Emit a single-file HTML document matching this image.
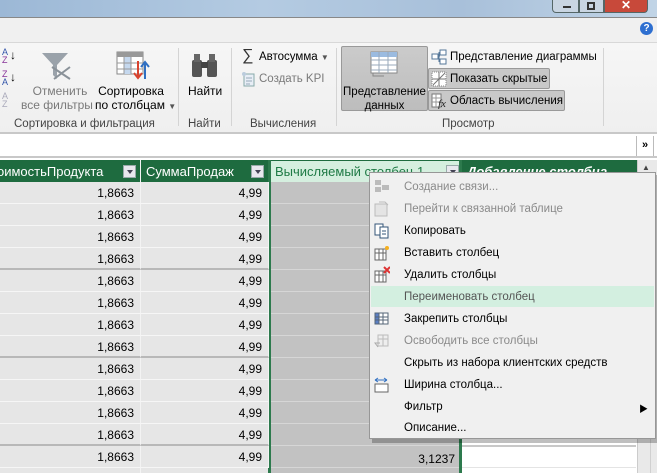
<!DOCTYPE html>
<html><head><meta charset="utf-8"><style>
*{margin:0;padding:0;box-sizing:border-box}
body{width:657px;height:473px;overflow:hidden;position:relative;font-family:"Liberation Sans","Noto Sans CJK SC",sans-serif;font-size:12px;background:#fff;color:#000}
.a{position:absolute}
.t{position:absolute;white-space:nowrap}
.g{color:#8a8a8a}
.cell{position:absolute;height:22px;border-bottom:1px solid #f6f6f6;border-right:1px solid #f3f3f3;text-align:right;padding-right:6px;line-height:22px;font-size:12px}
.mi{position:absolute;left:404px;font-size:11.5px;white-space:nowrap}
.dd{position:absolute;width:13px;height:13px;background:#e8e8ee;border:1px solid #9aa;top:165px}
.dd:after{content:"";position:absolute;left:3px;top:4px;border-left:3px solid transparent;border-right:3px solid transparent;border-top:4px solid #445}
</style></head><body>
<div class="a" style="left:0;top:0;width:657px;height:17px;background:linear-gradient(90deg,#9cb8d6,#b4cbe2 40%,#a8c0da 70%,#c1d4e6)"></div>
<div class="a" style="left:552px;top:0;width:27px;height:13px;background:#c9d5e2;border:1px solid #566;border-top:none;border-radius:0 0 0 4px"></div>
<div class="a" style="left:563px;top:6px;width:8px;height:2px;background:#333"></div>
<div class="a" style="left:579px;top:0;width:25px;height:13px;background:#c9d5e2;border:1px solid #566;border-top:none"></div>
<div class="a" style="left:587px;top:2px;width:8px;height:8px;border:2px solid #333"></div>
<div class="a" style="left:604px;top:0;width:44px;height:13px;background:#c8493a;border:1px solid #566;border-top:none;border-radius:0 0 4px 0;color:#fff;font-weight:bold;text-align:center;line-height:11px;font-size:12px">✕</div>
<div class="a" style="left:0;top:17px;width:657px;height:25px;background:#f0f0f0;border-top:1px solid #888"></div>
<div class="a" style="left:640px;top:22px;width:13px;height:13px;border-radius:50%;background:#2e6fd0;color:#fff;font-size:10px;font-weight:bold;text-align:center;line-height:13px">?</div>
<div class="a" style="left:0;top:42px;width:657px;height:92px;background:linear-gradient(#f6f6f6,#efefef);border-top:1px solid #d8d8d8;border-bottom:2px solid #c8c8c8"></div>
<div class="t" style="left:2px;top:48px;font-size:9px;line-height:8px;color:#3355aa">A<br><span style="color:#883399">Z</span></div><div class="t" style="left:10px;top:48px;font-size:12px">↓</div>
<div class="t" style="left:2px;top:70px;font-size:9px;line-height:8px;color:#883399">Z<br><span style="color:#3355aa">A</span></div><div class="t" style="left:10px;top:70px;font-size:12px">↓</div>
<div class="t" style="left:2px;top:92px;font-size:9px;line-height:8px;color:#aab">A<br>Z</div>
<svg class="a" style="left:40px;top:51px" width="32" height="30"><path d="M2 2H28L17 14V28L13 24V14Z" fill="#9aa2aa"/><path d="M12 16L30 28M30 16L14 28" stroke="#8a9299" stroke-width="2"/></svg>
<div class="t g" style="left:29px;top:84px;font-size:12px;text-align:center;line-height:14px;color:#7a7a7a;width:62px">Отменить<br><span style="margin-left:-8px">все фильтры</span></div>
<svg class="a" style="left:116px;top:51px" width="34" height="30"><rect x="1" y="1" width="26" height="22" fill="#fff" stroke="#888"/><rect x="1" y="1" width="26" height="5" fill="#999"/><rect x="8" y="6" width="7" height="17" fill="#c5d8ee"/><path d="M8 6V23M15 6V23M1 12H27M1 18H27" stroke="#999"/><path d="M22 10V26M18 22L22 27L26 22" stroke="#d9432e" stroke-width="2" fill="none"/><path d="M29 28V12M25 16L29 11L33 16" stroke="#2f6fc2" stroke-width="2" fill="none"/></svg>
<div class="t" style="left:95px;top:84px;font-size:12px;text-align:center;line-height:14px;width:72px">Сортировка<br>по столбцам <span style="font-size:8px;color:#555">▼</span></div>
<div class="t" style="left:14px;top:118px;font-size:11.5px;color:#444">Сортировка и фильтрация</div>
<div class="a" style="left:178px;top:48px;width:1px;height:78px;background:#d4d4d4"></div>
<svg class="a" style="left:191px;top:52px" width="28" height="26"><rect x="1" y="8" width="10" height="17" rx="2" fill="#555"/><rect x="16" y="8" width="10" height="17" rx="2" fill="#555"/><rect x="3" y="2" width="6" height="8" fill="#666"/><rect x="18" y="2" width="6" height="8" fill="#666"/><rect x="10" y="10" width="7" height="6" fill="#444"/></svg>
<div class="t" style="left:188px;top:84px;font-size:12px">Найти</div>
<div class="t" style="left:188px;top:118px;font-size:11.5px;color:#444">Найти</div>
<div class="a" style="left:231px;top:48px;width:1px;height:78px;background:#d4d4d4"></div>
<div class="t" style="left:242px;top:47px;font-size:16px;color:#333">∑</div>
<div class="t" style="left:259px;top:51px;font-size:11.5px">Автосумма <span style="font-size:8px;color:#555">▼</span></div>
<svg class="a" style="left:241px;top:71px" width="14" height="16"><rect x="3" y="3" width="10" height="12" fill="#e8eef6" stroke="#8aa"/><path d="M5 7H11M5 10H11M5 13H9" stroke="#9ab"/><circle cx="3" cy="3" r="2" fill="#bcd"/></svg>
<div class="t" style="left:259px;top:73px;font-size:11.5px;color:#7a7a7a">Создать KPI</div>
<div class="t" style="left:250px;top:118px;font-size:11.5px;color:#444">Вычисления</div>
<div class="a" style="left:336px;top:48px;width:1px;height:78px;background:#d4d4d4"></div>
<div class="a" style="left:341px;top:46px;width:87px;height:65px;background:linear-gradient(#cbcbcb,#bdbdbd);border:1px solid #999;border-radius:2px"></div>
<svg class="a" style="left:370px;top:51px" width="28" height="26"><rect x="1" y="1" width="26" height="21" fill="#fff" stroke="#888"/><rect x="1" y="1" width="26" height="5" fill="#9bbbe0"/><path d="M1 9H27M1 14H27M1 19H27M9 1V22M18 1V22" stroke="#9ab"/><path d="M3 22V25H14" stroke="#888" fill="none"/></svg>
<div class="t" style="left:341px;top:85px;width:87px;text-align:center;font-size:11.5px;line-height:14px">Представление<br>данных</div>
<svg class="a" style="left:431px;top:49px" width="16" height="16"><rect x="1" y="5" width="6" height="5" fill="#fff" stroke="#579"/><rect x="9" y="1" width="6" height="5" fill="#fff" stroke="#579"/><rect x="9" y="10" width="6" height="5" fill="#fff" stroke="#579"/><path d="M7 7H9M8 3V13" stroke="#579"/></svg>
<div class="t" style="left:450px;top:51px;font-size:11.5px">Представление диаграммы</div>
<div class="a" style="left:428px;top:68px;width:122px;height:21px;background:#c8c8c8;border:1px solid #999;border-radius:2px"></div>
<svg class="a" style="left:431px;top:71px" width="16" height="16"><rect x="1" y="1" width="14" height="14" fill="#fff" stroke="#888" stroke-dasharray="1 1"/><path d="M2 14L14 2M1 8H15M8 1V15" stroke="#777"/></svg>
<div class="t" style="left:450px;top:73px;font-size:11.5px">Показать скрытые</div>
<div class="a" style="left:428px;top:90px;width:137px;height:21px;background:#c8c8c8;border:1px solid #999;border-radius:2px"></div>
<svg class="a" style="left:431px;top:93px" width="16" height="16"><rect x="1" y="1" width="9" height="13" fill="#fff" stroke="#777"/><path d="M1 5H10M1 9H10M5 1V14" stroke="#999"/><text x="7" y="14" font-family="Liberation Serif" font-style="italic" font-size="11" fill="#222">fx</text></svg>
<div class="t" style="left:450px;top:95px;font-size:11.5px">Область вычисления</div>
<div class="t" style="left:442px;top:118px;font-size:11.5px;color:#444">Просмотр</div>
<div class="a" style="left:603px;top:48px;width:1px;height:78px;background:#d4d4d4"></div>
<div class="a" style="left:0;top:136px;width:657px;height:22px;background:#fff;border-bottom:2px solid #c8c8c8"></div>
<div class="a" style="left:636px;top:136px;width:18px;height:20px;border-left:1px solid #bbb;border-right:1px solid #bbb;text-align:center;font-size:11px;line-height:18px;font-weight:bold">»</div>
<div class="a" style="left:0;top:160px;width:637px;height:313px;background:#e6e6e6"></div>
<div class="a" style="left:461px;top:182px;width:176px;height:291px;background:#fff"></div>
<div class="a" style="left:270px;top:182px;width:191px;height:291px;background:#c2c2c2"></div>
<div class="a" style="left:0;top:160px;width:637px;height:22px;background:#1e6b3f"></div>
<div class="t" style="left:-3px;top:164px;color:#fff;font-size:13px">оимостьПродукта</div>
<div class="dd" style="left:123px"></div>
<div class="a" style="left:140px;top:160px;width:1px;height:313px;background:#f4f4f4"></div>
<div class="t" style="left:146px;top:164px;color:#fff;font-size:13px">СуммаПродаж</div>
<div class="dd" style="left:251px"></div>
<div class="a" style="left:270px;top:161px;width:191px;height:21px;background:#d5efdf"></div>
<div class="t" style="left:275px;top:164px;color:#1e7a45;font-size:13px">Вычисляемый столбец 1</div>
<div class="dd" style="left:446px"></div>
<div class="t" style="left:467px;top:164px;color:#fff;font-size:13px;font-style:italic;font-weight:bold">Добавление столбца</div>
<div class="a" style="left:268px;top:160px;width:3px;height:313px;background:#2d7a4d"></div>
<div class="a" style="left:459px;top:160px;width:3px;height:313px;background:#2d7a4d"></div>
<div class="a" style="left:637px;top:160px;width:20px;height:313px;background:#e9e9e9;border-left:1px solid #ccc"></div>
<div class="t" style="left:642px;top:163px;font-size:8px;color:#444">▲</div>
<div class="a" style="left:650px;top:182px;width:1px;height:291px;background:#d0d0d0"></div>
<div id="rows"></div>
<div class="a" style="left:372px;top:175px;width:287px;height:268px;background:rgba(0,0,0,.25)"></div>
<div class="a" style="left:369px;top:172px;width:287px;height:267px;background:#f0f0f0;border:1px solid #979797"></div>
<div class="a" style="left:371px;top:286px;width:283px;height:21px;background:#d3efe0"></div>
<svg class="a" style="left:374px;top:179px" width="16" height="260">
<g fill="#bbb"><rect x="1" y="1" width="6" height="5"/><rect x="8" y="6" width="7" height="5"/><rect x="1" y="8" width="6" height="5"/></g>
<g transform="translate(0,22)" fill="none" stroke="#bbb"><rect x="1" y="3" width="12" height="12" fill="#e4e4e4"/><path d="M5 1H11L14 4"/></g>
<g transform="translate(0,44)" fill="#fff" stroke="#357"><rect x="1" y="1" width="8" height="11"/><rect x="6" y="4" width="8" height="11"/><path d="M8 8H12M8 11H12"/></g>
<g transform="translate(0,66)" stroke="#666" fill="#fff"><rect x="1" y="4" width="11" height="11"/><path d="M1 8H12M5 4V15M9 4V15"/><circle cx="13" cy="3" r="2" fill="#f5b020" stroke="none"/></g>
<g transform="translate(0,88)" stroke="#666" fill="#fff"><rect x="1" y="4" width="11" height="11"/><path d="M1 8H12M5 4V15M9 4V15"/><path d="M10 0L16 6M16 0L10 6" stroke="#d33" stroke-width="2"/></g>
<g transform="translate(0,132)" stroke="#567" fill="#fff"><rect x="1" y="2" width="13" height="11"/><rect x="1" y="2" width="4" height="11" fill="#5a7fc4"/><path d="M1 6H14M1 9H14M9 2V13"/></g>
<g transform="translate(0,154)" stroke="#bbb" fill="#eee"><rect x="4" y="2" width="10" height="11"/><path d="M4 6H14M9 2V13"/><path d="M6 10H1L4 14" fill="none" stroke="#aaa"/></g>
<g transform="translate(0,198)"><path d="M1 3H13M1 3L4 1M1 3L4 5M13 3L10 1M13 3L10 5" stroke="#2f6fc2" fill="none"/><rect x="1" y="7" width="13" height="8" fill="#fff" stroke="#666"/></g>
</svg>
<div class="mi g" style="top:181px">Создание связи...</div>
<div class="mi g" style="top:203px">Перейти к связанной таблице</div>
<div class="mi" style="top:225px">Копировать</div>
<div class="mi" style="top:247px">Вставить столбец</div>
<div class="mi" style="top:269px">Удалить столбцы</div>
<div class="mi" style="top:291px;color:#555">Переименовать столбец</div>
<div class="mi" style="top:313px">Закрепить столбцы</div>
<div class="mi g" style="top:335px">Освободить все столбцы</div>
<div class="mi" style="top:357px">Скрыть из набора клиентских средств</div>
<div class="mi" style="top:379px">Ширина столбца...</div>
<div class="mi" style="top:401px">Фильтр</div>
<div class="t" style="left:639px;top:402px;font-size:9px">▶</div>
<div class="mi" style="top:422px">Описание...</div>
<script>
var h='';for(var i=0;i<13;i++){var y=182+22*i;var bc=(i%4==3)?'#b8b8b8':'#f6f6f6';var bw=(i%4==3)?2:1;
h+='<div class="cell" style="left:0;top:'+y+'px;width:141px;border-bottom:'+bw+'px solid '+bc+'">1,8663</div>';
h+='<div class="cell" style="left:141px;top:'+y+'px;width:128px;border-bottom:'+bw+'px solid '+bc+'">4,99</div>';
h+='<div class="a" style="left:271px;top:'+(y+21)+'px;width:188px;height:1px;background:#d6d6d6"></div>';
h+='<div class="a" style="left:462px;top:'+(y+21)+'px;width:174px;height:'+bw+'px;background:'+(i%4==3?'#c8c8c8':'#e4e4e4')+'"></div>';}
h+='<div class="t" style="left:400px;top:452px;width:55px;text-align:right;font-size:12px">3,1237</div>';
document.getElementById('rows').innerHTML=h;
</script>
</body></html>
